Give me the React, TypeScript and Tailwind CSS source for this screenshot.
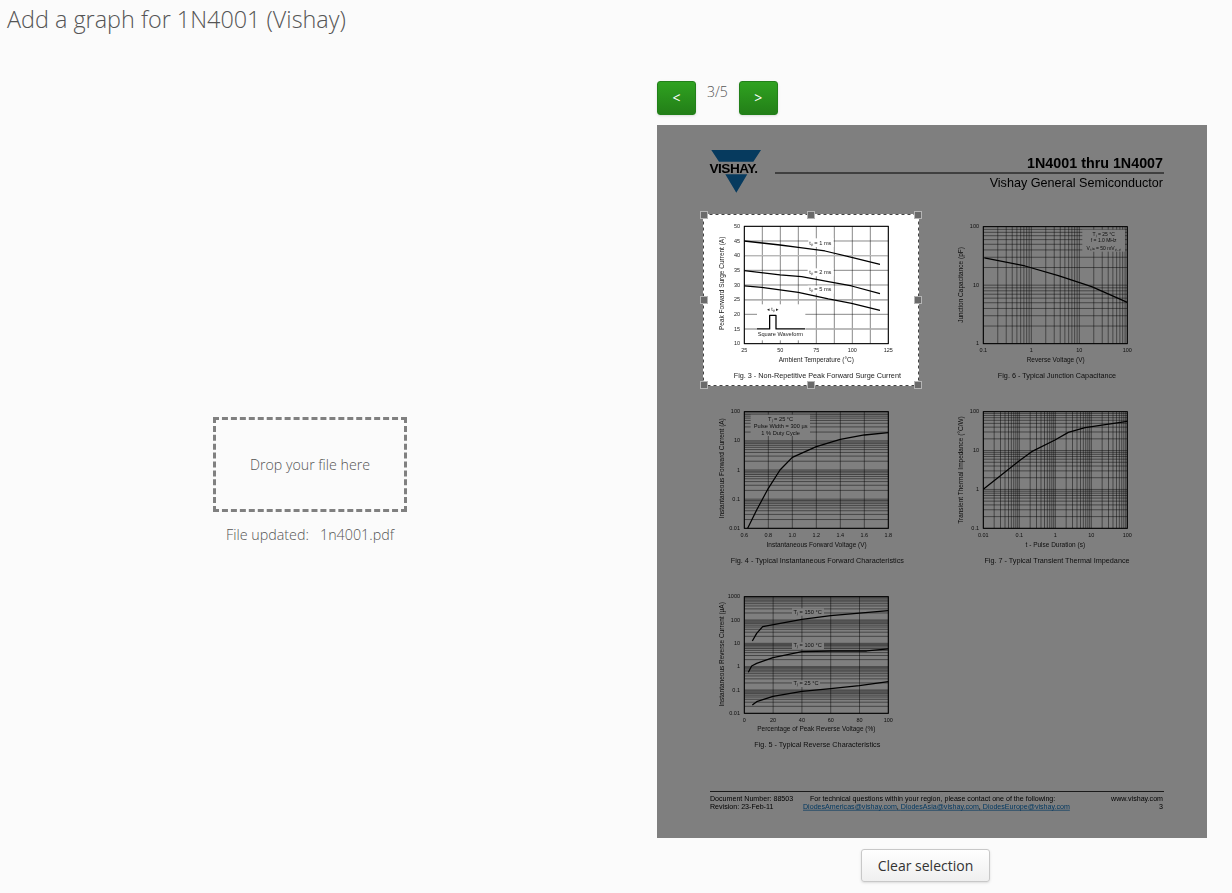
import React from "react";

// positions of log grid lines across n decades between a and b
const logLines = (a: number, b: number, n: number) => {
  const out: number[] = [];
  const step = (b - a) / n;
  for (let d = 0; d < n; d++) {
    for (let m = 1; m < 10; m++) {
      out.push(a + (d + Math.log10(m)) * step);
    }
  }
  out.push(b);
  return out;
};

const even = (a: number, b: number, n: number) =>
  Array.from({ length: n + 1 }, (_, i) => a + ((b - a) * i) / n);

const toPath = (pts: number[][]) => "M" + pts.map((p) => p.join(" ")).join("L");

interface Label {
  x: number;
  y: number;
  text: string;
  anchor?: "start" | "middle" | "end";
  size?: number;
}

interface FigProps {
  x: number;
  y: number;
  box: [number, number, number, number];
  vLines: number[];
  hLines: number[];
  thick?: number[];
  masks?: number[][];
  curves: number[][][];
  labels: Label[];
  xTicks: string[];
  yTicks: string[];
  yLabel: [number, number, string];
  xLabel: [number, number, string];
  caption: [number, number, string];
}

// drawn in the zoomed-in unit (1/3 px), so the group is scaled down
const Fig: React.FC<FigProps> = ({
  x,
  y,
  box,
  vLines,
  hLines,
  thick = [],
  masks = [],
  curves,
  labels,
  xTicks,
  yTicks,
  yLabel,
  xLabel,
  caption,
}) => {
  const [l, t, r, b] = box;
  const xt = even(l, r, xTicks.length - 1);
  const yt = even(t, b, yTicks.length - 1);
  return (
    <g transform={`translate(${x} ${y}) scale(0.3333)`} fontSize="16.5" fill="#222">
      {vLines.map((v, i) => (
        <line key={i} x1={v} x2={v} y1={t} y2={b} stroke="#000" strokeWidth="1.4" />
      ))}
      {hLines.map((v, i) => (
        <line key={i} x1={l} x2={r} y1={v} y2={v} stroke="#000" strokeWidth="1.4" />
      ))}
      {thick.map((v, i) => (
        <line key={i} x1={l} x2={r} y1={v} y2={v} stroke="#b8b8b8" strokeWidth="4" />
      ))}
      {masks.map((m, i) => (
        <rect key={i} x={m[0]} y={m[1]} width={m[2]} height={m[3]} fill="#fff" />
      ))}
      <rect x={l} y={t} width={r - l} height={b - t} fill="none" stroke="#000" strokeWidth="3" />
      {curves.map((c, i) => (
        <path key={i} d={toPath(c)} fill="none" stroke="#000" strokeWidth="3.8" strokeLinejoin="round" />
      ))}
      {xTicks.map((s, i) => (
        <text key={i} x={xt[i]} y={b + 26} textAnchor="middle">
          {s}
        </text>
      ))}
      {yTicks.map((s, i) => (
        <text key={i} x={l - 13} y={yt[i] + 5} textAnchor="end">
          {s}
        </text>
      ))}
      {labels.map((a, i) => (
        <text key={i} x={a.x} y={a.y} textAnchor={a.anchor ?? "middle"} fontSize={a.size ?? 17}>
          {a.text}
        </text>
      ))}
      <text
        transform={`translate(${yLabel[0]} ${yLabel[1]}) rotate(-90)`}
        textAnchor="middle"
        fontSize="19.5"
      >
        {yLabel[2]}
      </text>
      <text x={xLabel[0]} y={xLabel[1]} textAnchor="middle" fontSize="19.5">
        {xLabel[2]}
      </text>
      <text x={caption[0]} y={caption[1]} textAnchor="middle" fontSize="21.8">
        {caption[2]}
      </text>
    </g>
  );
};

const handles = [
  [704, 215],
  [811, 215],
  [918, 215],
  [704, 300],
  [918, 300],
  [704, 385],
  [811, 385],
  [918, 385],
];

const DatasheetPage = () => (
  <svg
    viewBox="657 125 550 713"
    className="block h-[713px] w-[550px]"
    fontFamily="'Liberation Sans', Arial, sans-serif"
  >
    <defs>
      <filter id="soft" x="0" y="0" width="1" height="1">
        <feGaussianBlur stdDeviation="0.36" />
      </filter>
    </defs>
    <rect x="657" y="125" width="550" height="713" fill="#fff" />
    <g filter="url(#soft)">
      {/* logo + title */}
      <path d="M711.3 150h49.7l-7.7 11.7h-34.3zM725.3 174.3h22l-11 18.4z" fill="#0a74bd" />
      <text x="709.5" y="172.8" fontSize="13.6" fontWeight="700" letterSpacing="-0.5" fill="#000">
        VISHAY.
      </text>
      <line x1="775" x2="1164" y1="173" y2="173" stroke="#000" strokeWidth="1" />
      <text x="1163" y="167.5" textAnchor="end" fontSize="14.3" fontWeight="700" fill="#000">
        1N4001 thru 1N4007
      </text>
      <text x="1163" y="186.5" textAnchor="end" fontSize="12.6" fill="#000">
        Vishay General Semiconductor
      </text>

      <Fig
        x={695}
        y={205}
        box={[148, 64, 580, 416]}
        vLines={even(148, 580, 8)}
        hLines={even(64, 416, 8)}
        thick={[152, 285, 372]}
        masks={[
          [340, 100, 76, 26],
          [338, 190, 78, 24],
          [338, 242, 78, 24],
          [186, 298, 145, 108],
        ]}
        curves={[
          [[148, 108], [255, 120], [310, 127], [390, 138], [470, 157], [555, 178]],
          [[148, 197], [255, 210], [320, 215], [400, 230], [470, 243], [555, 266]],
          [[148, 243], [200, 247], [310, 262], [400, 282], [470, 295], [555, 316]],
          [[186, 372], [224, 372], [224, 331], [243, 331], [243, 372], [330, 372]],
        ]}
        labels={[
          { x: 376, y: 120, text: "tₚ = 1 ms" },
          { x: 376, y: 207, text: "tₚ = 2 ms" },
          { x: 376, y: 258, text: "tₚ = 5 ms" },
          { x: 234, y: 318, text: "◂ tₚ ▸", size: 16 },
          { x: 256, y: 394, text: "Square Waveform", size: 17 },
        ]}
        xTicks={["25", "50", "75", "100", "125"]}
        yTicks={["50", "45", "40", "35", "30", "25", "20", "15", "10"]}
        yLabel={[86, 235, "Peak Forward Surge Current (A)"]}
        xLabel={[364, 472, "Ambient Temperature (°C)"]}
        caption={[367, 519, "Fig. 3 - Non-Repetitive Peak Forward Surge Current"]}
      />

      <Fig
        x={945}
        y={135}
        box={[115, 275, 547, 626]}
        vLines={logLines(115, 547, 3)}
        hLines={logLines(626, 275, 2)}
        masks={[[412, 284, 128, 66]]}
        curves={[[[118, 369], [240, 393], [340, 422], [440, 455], [547, 502]]]}
        labels={[
          { x: 476, y: 303, text: "Tⱼ = 25 °C", size: 15 },
          { x: 476, y: 322, text: "f = 1.0 MHz", size: 15 },
          { x: 476, y: 344, text: "Vₛᵢₐ = 50 mVₚ₋ₚ", size: 15 },
        ]}
        xTicks={["0.1", "1", "10", "100"]}
        yTicks={["100", "10", "1"]}
        yLabel={[55, 450, "Junction Capacitance (pF)"]}
        xLabel={[332, 682, "Reverse Voltage (V)"]}
        caption={[336, 729, "Fig. 6 - Typical Junction Capacitance"]}
      />

      <Fig
        x={700}
        y={400}
        box={[133, 35, 565, 385]}
        vLines={even(133, 565, 6)}
        hLines={logLines(385, 35, 4)}
        masks={[[152, 44, 178, 64]]}
        curves={[
          [[143, 385], [170, 330], [205, 265], [240, 210], [277, 172], [349, 140], [421, 118], [493, 105], [565, 98]],
        ]}
        labels={[
          { x: 242, y: 63, text: "Tⱼ = 25 °C" },
          { x: 242, y: 84, text: "Pulse Width = 300 µs" },
          { x: 242, y: 105, text: "1 % Duty Cycle" },
        ]}
        xTicks={["0.6", "0.8", "1.0", "1.2", "1.4", "1.6", "1.8"]}
        yTicks={["100", "10", "1", "0.1", "0.01"]}
        yLabel={[71, 205, "Instantaneous Forward Current (A)"]}
        xLabel={[350, 440, "Instantaneous Forward Voltage (V)"]}
        caption={[352, 488, "Fig. 4 - Typical Instantaneous Forward Characteristics"]}
      />

      <Fig
        x={945}
        y={400}
        box={[115, 35, 547, 385]}
        vLines={logLines(115, 547, 4)}
        hLines={logLines(385, 35, 3)}
        curves={[[[115, 268], [222, 183], [260, 155], [330, 120], [370, 97], [420, 83], [547, 64]]]}
        labels={[]}
        xTicks={["0.01", "0.1", "1", "10", "100"]}
        yTicks={["100", "10", "1", "0.1"]}
        yLabel={[53, 210, "Transient Thermal Impedance (°C/W)"]}
        xLabel={[331, 440, "t - Pulse Duration (s)"]}
        caption={[336, 488, "Fig. 7 - Typical Transient Thermal Impedance"]}
      />

      <Fig
        x={700}
        y={585}
        box={[133, 35, 565, 385]}
        vLines={even(133, 565, 5)}
        hLines={logLines(385, 35, 5)}
        masks={[
          [276, 70, 96, 22],
          [276, 172, 96, 20],
          [276, 286, 84, 20],
        ]}
        curves={[
          [[157, 168], [170, 145], [188, 125], [306, 103], [392, 92], [565, 77]],
          [[145, 262], [155, 243], [170, 235], [219, 218], [306, 200], [392, 198], [500, 198], [565, 192]],
          [[157, 360], [170, 350], [219, 334], [306, 319], [392, 311], [478, 302], [565, 290]],
        ]}
        labels={[
          { x: 323, y: 86, text: "Tⱼ = 150 °C" },
          { x: 323, y: 187, text: "Tⱼ = 100 °C" },
          { x: 318, y: 301, text: "Tⱼ = 25 °C" },
        ]}
        xTicks={["0", "20", "40", "60", "80", "100"]}
        yTicks={["1000", "100", "10", "1", "0.1", "0.01"]}
        yLabel={[71, 208, "Instantaneous Reverse Current (µA)"]}
        xLabel={[349, 439, "Percentage of Peak Reverse Voltage (%)"]}
        caption={[352, 487, "Fig. 5 - Typical Reverse Characteristics"]}
      />

      {/* page footer */}
      <line x1="710" x2="1164" y1="791.5" y2="791.5" stroke="#000" strokeWidth="0.8" />
      <g fontSize="7.1" fill="#000">
        <text x="710" y="800.8">Document Number: 88503</text>
        <text x="710" y="808.8">Revision: 23-Feb-11</text>
        <text x="810" y="800.8">For technical questions within your region, please contact one of the following:</text>
        <text x="803" y="808.8" fill="#0a6fc0" textDecoration="underline">
          DiodesAmericas@vishay.com
          <tspan fill="#000" textDecoration="none">, </tspan>
          DiodesAsia@vishay.com
          <tspan fill="#000" textDecoration="none">, </tspan>
          DiodesEurope@vishay.com
        </text>
        <text x="1163" y="800.8" textAnchor="end">www.vishay.com</text>
        <text x="1163" y="808.8" textAnchor="end">3</text>
      </g>
    </g>

    {/* dim everything but the crop selection */}
    <path
      fillRule="evenodd"
      d="M657 125h550v713h-550zM703.5 214.5h215v171h-215z"
      fill="#000"
      fillOpacity="0.5"
    />
    <rect x="703.5" y="214.5" width="215" height="171" fill="none" stroke="#fff" strokeWidth="1" />
    <rect x="703.5" y="214.5" width="215" height="171" fill="none" stroke="#444" strokeWidth="1" strokeDasharray="3 3" />
    {handles.map(([hx, hy], i) => (
      <rect
        key={i}
        x={hx - 3.5}
        y={hy - 3.5}
        width="7"
        height="7"
        fill="#6a6a6a"
        stroke="#b5b5b5"
        strokeWidth="1"
      />
    ))}
  </svg>
);

const navBtn =
  "h-[34px] w-[39px] rounded-[3px] border border-[#22801a] bg-gradient-to-b from-[#2fa220] to-[#237f18] text-sm text-white shadow-sm";

export default function App() {
  return (
    <div className="h-[893px] overflow-hidden bg-[#fbfbfb] font-['Open_Sans',sans-serif] text-[#555]">
      <h1 className="pl-[7px] pt-[2px] pb-[1px] text-[23.4px] leading-[34px] font-light text-[#555]">
        Add a graph for 1N4001 (Vishay)
      </h1>
      <div className="mt-[44px] flex items-center">
        <div className="flex w-[620px] flex-col items-center pb-[1px]">
          <div className="flex h-[95px] w-[194px] items-center justify-center border-[3px] border-dashed border-[#808080] text-[14.2px] font-light text-[#555]">
            Drop your file here
          </div>
          <p className="mt-[13px] text-[14.3px] leading-[20px] font-light whitespace-pre text-[#555]">
            File updated:   1n4001.pdf
          </p>
        </div>
        <div className="ml-[37px] w-[550px]">
          <div className="flex h-[34px] items-start">
            <button className={navBtn}>&lt;</button>
            <span className="mx-[11px] mt-[1px] text-sm leading-[20px] font-light text-[#555]">3/5</span>
            <button className={navBtn}>&gt;</button>
          </div>
          <div className="mt-[10px]">
            <DatasheetPage />
          </div>
          <div className="mt-[11px] flex justify-center pr-[13px]">
            <button className="h-[33px] w-[129px] rounded-[3px] border border-[#c8c8c8] bg-gradient-to-b from-white to-[#efefef] text-sm text-[#333] shadow-sm">
              Clear selection
            </button>
          </div>
        </div>
      </div>
    </div>
  );
}
